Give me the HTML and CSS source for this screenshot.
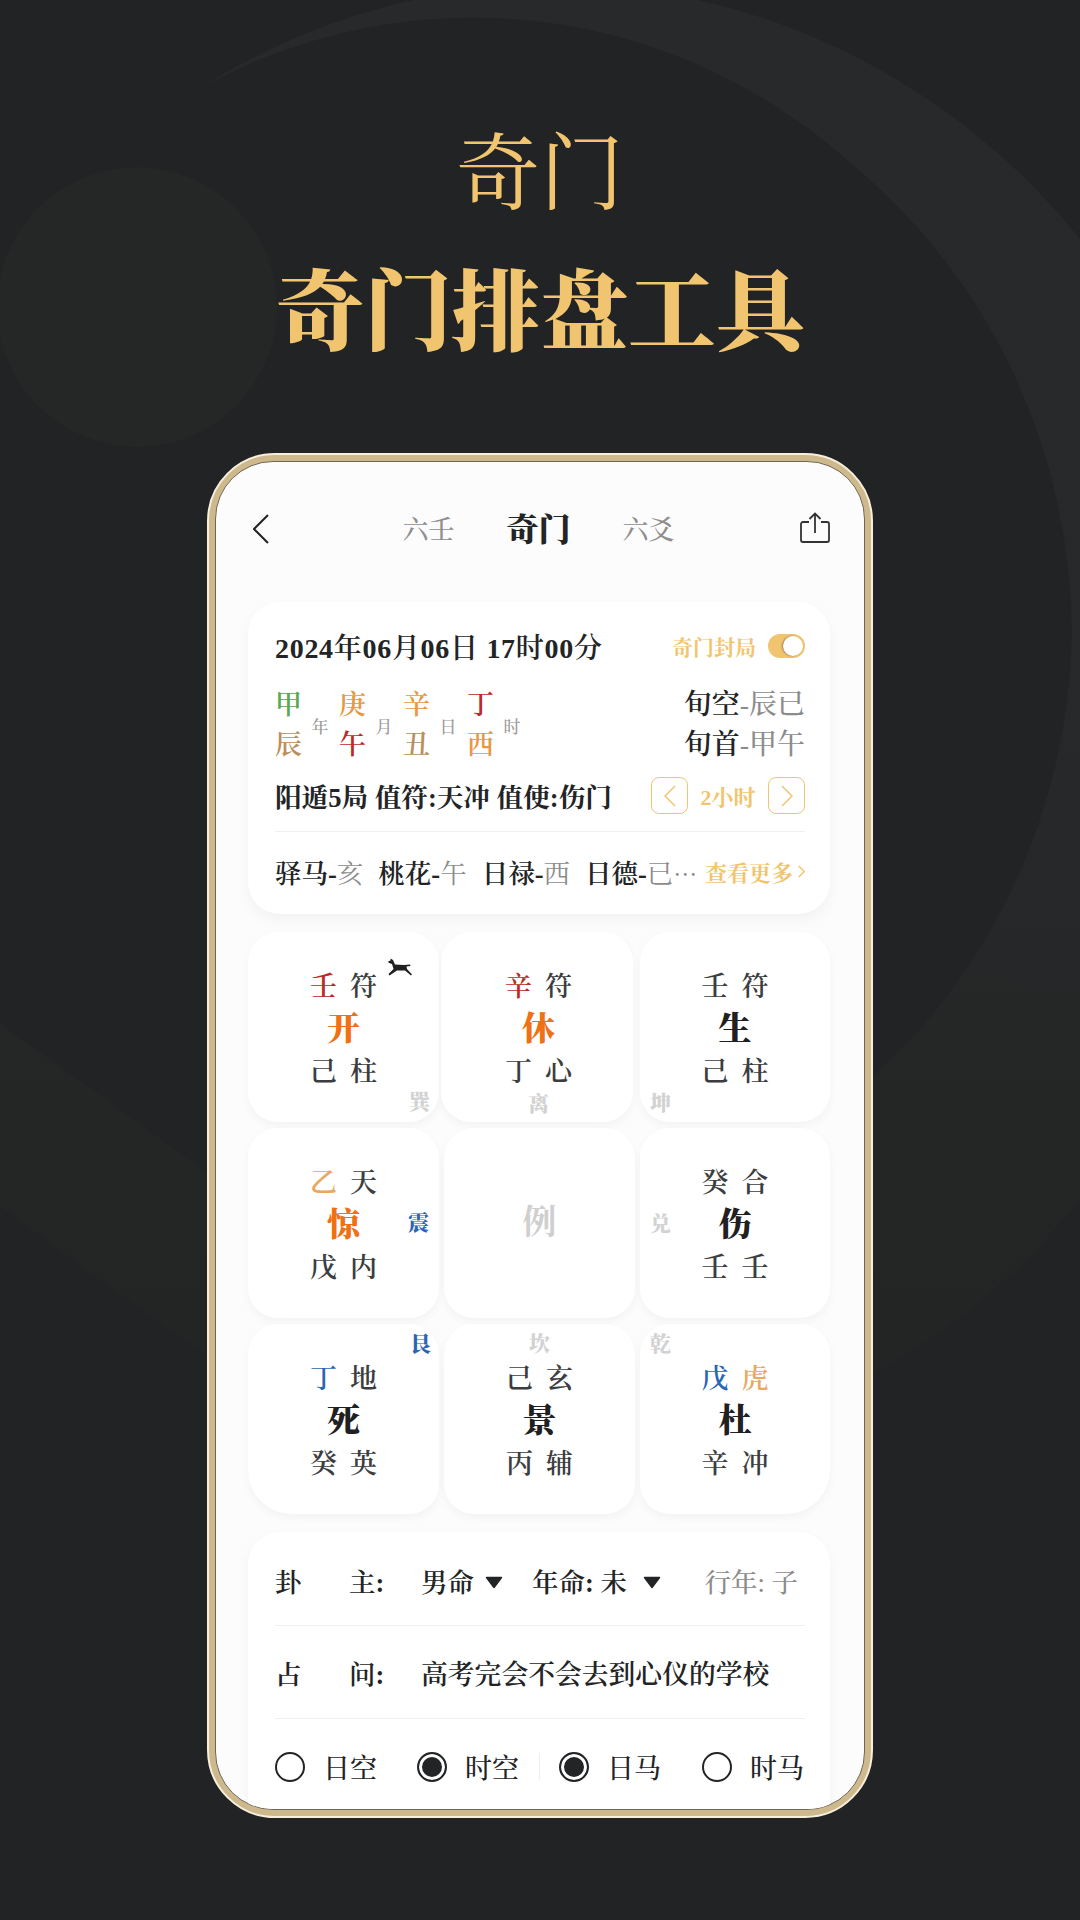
FILE: index.html
```html
<!DOCTYPE html>
<html lang="zh-CN">
<head>
<meta charset="utf-8">
<title>奇门排盘工具</title>
<link rel="stylesheet" href="styles.css">
</head>
<body>
<main class="page">
  <svg class="decor" viewBox="0 0 1080 1920" aria-hidden="true">
    <defs>
      <linearGradient id="bandFill" x1="0" y1="0" x2="0" y2="1">
        <stop offset="0" stop-color="#27292a"/>
        <stop offset="0.55" stop-color="#26282a"/>
        <stop offset="0.8" stop-color="#242625"/>
        <stop offset="1" stop-color="#232524"/>
      </linearGradient>
    </defs>
    <circle cx="137" cy="307" r="140" fill="#252726"/>
    <path fill="url(#bandFill)" d="M200 88 A687 718 0 0 1 1080 239 L1080 1200 A687 718 0 0 1 207 1355 Q100 1280 0 1206 L0 1024 Q100 1095 207 1173 A581 603 0 0 0 873 1077 A581 603 0 0 0 1072 637 A581 603 0 0 0 860 171 A581 603 0 0 0 200 88 Z"/>
  </svg>

  <header class="hero">
    <div class="hero-sub">奇门</div>
    <h1 class="hero-title">奇门排盘工具</h1>
  </header>

  <section class="phone">
    <div class="screen">
      <nav class="nav">
        <span class="nav-back">
          <svg class="icon-back" viewBox="0 0 16 30"><path d="M15 1 L1 15 L15 29"/></svg>
        </span>
        <div class="tabs">
          <span class="tab">六壬</span>
          <span class="tab tab-on">奇门</span>
          <span class="tab">六爻</span>
        </div>
        <svg class="icon-share" viewBox="0 0 30 31"><path d="M9 10 H3 a2 2 0 0 0 -2 2 V28 a2 2 0 0 0 2 2 H27 a2 2 0 0 0 2 -2 V12 a2 2 0 0 0 -2 -2 H21"/><path d="M15 21 V1.5 M9.5 7 L15 1.5 L20.500 7"/></svg>
      </nav>

      <section class="card card-info">
        <div class="row-date">
          <span class="date">2024年06月06日 17时00分</span>
          <span class="lock">奇门封局</span>
          <span class="toggle"><span class="knob"></span></span>
        </div>
        <div class="row-pillars">
          <div class="pillar"><div class="gz"><span class="green">甲</span><span class="tan">辰</span></div><span class="pl">年</span></div>
          <div class="pillar"><div class="gz"><span class="amber">庚</span><span class="red">午</span></div><span class="pl">月</span></div>
          <div class="pillar"><div class="gz"><span class="amber">辛</span><span class="tan">丑</span></div><span class="pl">日</span></div>
          <div class="pillar"><div class="gz"><span class="red">丁</span><span class="amber">西</span></div><span class="pl">时</span></div>
          <div class="xun">
            <div>旬空<span class="mute">-辰已</span></div>
            <div>旬首<span class="mute">-甲午</span></div>
          </div>
        </div>
        <div class="row-ju">
          <span class="ju">阳遁5局 值符:天冲 值使:伤门</span>
          <span class="step"><svg class="icon-step" viewBox="0 0 12 22"><path d="M11 1 L1 11 L11 21"/></svg></span>
          <span class="hours">2小时</span>
          <span class="step"><svg class="icon-step" viewBox="0 0 12 22"><path d="M1 1 L11 11 L1 21"/></svg></span>
        </div>
        <div class="rule"></div>
        <div class="row-more">
          <span class="sha">驿马<i class="dash">-</i><span class="mute">亥</span></span>
          <span class="sha">桃花<i class="dash">-</i><span class="mute">午</span></span>
          <span class="sha">日禄<i class="dash">-</i><span class="mute">西</span></span>
          <span class="sha sha-last">日德<i class="dash">-</i><span class="mute">已</span><span class="dots">…</span></span>
          <span class="more">查看更多<svg class="icon-more" viewBox="0 0 9 16"><path d="M1 1 L8 8 L1 15"/></svg></span>
        </div>
      </section>

      <section class="grid">
        <article class="cell">
          <svg class="horse" viewBox="0 0 24 18"><path d="M2.500 .5 L5 2 L7 6.500 L16 7 L22 6.500 L22.500 8 L18.500 8.500 L19 11 L24 16.500 L23 17.500 L17 12.500 L9 12.500 L1.500 17.500 L.5 16 L5.500 11 L4 6 L1 5 L0 3.500 L2.500 2.500 Z"/></svg>
          <div class="pair"><span class="red">壬</span><span>符</span></div>
          <div class="door orange">开</div>
          <div class="pair"><span>己</span><span>柱</span></div>
          <span class="gong gong-br">巽</span>
        </article>
        <article class="cell cell-shift">
          <div class="pair"><span class="red">辛</span><span>符</span></div>
          <div class="door orange">休</div>
          <div class="pair"><span>丁</span><span>心</span></div>
          <span class="gong gong-b">离</span>
        </article>
        <article class="cell">
          <div class="pair"><span>壬</span><span>符</span></div>
          <div class="door">生</div>
          <div class="pair"><span>己</span><span>柱</span></div>
          <span class="gong gong-bl">坤</span>
        </article>

        <article class="cell">
          <div class="pair"><span class="peach">乙</span><span>天</span></div>
          <div class="door orange">惊</div>
          <div class="pair"><span>戊</span><span>内</span></div>
          <span class="gong gong-r blue">震</span>
        </article>
        <article class="cell cell-center">
          <span class="example">例</span>
        </article>
        <article class="cell">
          <div class="pair"><span>癸</span><span>合</span></div>
          <div class="door">伤</div>
          <div class="pair"><span>壬</span><span>壬</span></div>
          <span class="gong gong-l">兑</span>
        </article>

        <article class="cell cell-round-bl">
          <div class="pair"><span class="blue">丁</span><span>地</span></div>
          <div class="door">死</div>
          <div class="pair"><span>癸</span><span>英</span></div>
          <span class="gong gong-tr blue">艮</span>
        </article>
        <article class="cell">
          <div class="pair"><span>己</span><span>玄</span></div>
          <div class="door">景</div>
          <div class="pair"><span>丙</span><span>辅</span></div>
          <span class="gong gong-t">坎</span>
        </article>
        <article class="cell cell-round-br">
          <div class="pair"><span class="blue">戊</span><span class="peach">虎</span></div>
          <div class="door">杜</div>
          <div class="pair"><span>辛</span><span>冲</span></div>
          <span class="gong gong-tl">乾</span>
        </article>
      </section>

      <section class="card card-form">
        <div class="form-row form-row-first">
          <span class="f-a">卦</span><span class="f-b">主:</span>
          <span>男命</span><svg class="caret caret-a" viewBox="0 0 18 13"><path d="M1.500 1.500 H16.500 L9 11.500 Z"/></svg>
          <span class="f-year">年命: 未</span><svg class="caret caret-b" viewBox="0 0 18 13"><path d="M1.500 1.500 H16.500 L9 11.500 Z"/></svg>
          <span class="f-walk">行年: 子</span>
        </div>
        <div class="rule"></div>
        <div class="form-row">
          <span class="f-a">占</span><span class="f-b">问:</span>
          <span class="question">高考完会不会去到心仪的学校</span>
        </div>
        <div class="rule"></div>
        <div class="radios">
          <label class="radio-item"><span class="radio"></span><span>日空</span></label>
          <label class="radio-item"><span class="radio radio-on"></span><span>时空</span></label>
          <span class="radio-sep"></span>
          <label class="radio-item radio-item-wide"><span class="radio radio-on"></span><span>日马</span></label>
          <label class="radio-item radio-item-last"><span class="radio"></span><span>时马</span></label>
        </div>
      </section>
    </div>
  </section>
</main>
</body>
</html>
```
FILE: styles.css
```css
* { box-sizing: border-box; }
html, body { margin: 0; padding: 0; }
body {
  background: #212325;
  font-family: "Liberation Serif", "Noto Serif CJK SC", "Noto Sans CJK SC", serif;
  color: #222426;
}
.page {
  position: relative;
  width: 1080px;
  height: 1920px;
  overflow: hidden;
  background: #212325;
}
.decor { position: absolute; inset: 0; width: 1080px; height: 1920px; }

.hero { position: relative; text-align: center; color: #f1c56f; padding-top: 125px; }
.hero-sub { font-size: 84px; line-height: 100px; font-weight: 400; }
.hero-title { margin: 39px 0 0; font-size: 88px; line-height: 100px; font-weight: 900; }

.phone {
  position: relative;
  width: 666px;
  height: 1365px;
  margin: 89px 0 0 207px;
  border: 2px solid #f7eedd;
  border-radius: 68px;
  background: #cdb98c;
  padding: 6px;
}
.screen {
  width: 100%;
  height: 100%;
  background: #fcfcfc;
  border: 1px solid #6f6653;
  border-radius: 58px;
  overflow: hidden;
}

.nav {
  display: flex;
  align-items: center;
  justify-content: space-between;
  height: 60px;
  margin: 37px 0 43px;
  padding: 0 34px 0 37px;
}
.nav-back { width: 24px; display: flex; }
.icon-back { width: 16px; height: 30px; fill: none; stroke: #222; stroke-width: 2; }
.tabs { display: flex; align-items: center; gap: 52px; margin-top: -4px; }
.tab { font-size: 26px; font-weight: 500; color: #8e8e8e; }
.tab-on { font-size: 32px; font-weight: 900; color: #222426; }
.icon-share { width: 30px; height: 31px; fill: none; stroke: #333; stroke-width: 1.800; margin-top: -3px; }

.card {
  width: 582px;
  margin-left: 32px;
  background: #fff;
  border-radius: 32px;
  box-shadow: 0 6px 14px rgba(0, 0, 0, .045);
}
.card-info { height: 312px; padding: 26px 25px 0 27px; }

.row-date { display: flex; align-items: center; height: 36px; }
.date { font-size: 28px; font-weight: 600; letter-spacing: .7px; white-space: nowrap; }
.lock { margin-left: auto; font-size: 21px; font-weight: 700; color: #f1c56f; }
.toggle {
  display: flex;
  justify-content: flex-end;
  align-items: center;
  width: 37px;
  height: 24px;
  margin-left: 12px;
  padding-right: 2px;
  border-radius: 12px;
  background: #f1c56f;
}
.knob {
  width: 20px;
  height: 20px;
  border-radius: 50%;
  background: #fff;
  box-shadow: -1px 0 2px rgba(0, 0, 0, .35);
}

.row-pillars { display: flex; align-items: center; height: 80px; margin-top: 21px; }
.pillar { display: flex; align-items: center; width: 64px; }
.gz { display: flex; flex-direction: column; width: 27px; font-size: 27px; line-height: 40px; font-weight: 600; text-align: center; }
.pl { width: 18px; margin-left: 9px; font-size: 17px; font-weight: 500; color: #9a9a9a; text-align: center; }
.xun { margin-left: auto; font-size: 28px; line-height: 40px; font-weight: 600; text-align: right; }
.mute { color: #8c8c8c; font-weight: 500; }

.row-ju { display: flex; align-items: center; height: 37px; margin-top: 12px; }
.ju { font-size: 26.600px; font-weight: 700; margin-right: auto; white-space: nowrap; }
.step {
  display: flex;
  align-items: center;
  justify-content: center;
  width: 37px;
  height: 37px;
  border: 1.500px solid #f1c56f;
  border-radius: 8px;
}
.icon-step { width: 12px; height: 22px; fill: none; stroke: #f1c56f; stroke-width: 1.500; }
.hours { width: 80px; text-align: center; font-size: 22px; font-weight: 700; color: #f1c56f; }

.rule { height: 1px; background: #efefef; }
.card-info .rule { margin-top: 17px; }

.row-more { display: flex; align-items: center; height: 78px; white-space: nowrap; }
.sha { font-size: 26.500px; font-weight: 600; margin-right: 15px; }
.sha-last { margin-right: 0; }
.sha .mute { font-weight: 400; }
.dash { font-style: normal; }
.dots { font-family: "Noto Serif CJK SC", "Noto Sans CJK SC", serif; font-size: 24px; color: #8c8c8c; }
.more {
  display: flex;
  align-items: center;
  gap: 5px;
  margin-left: auto;
  font-size: 22px;
  font-weight: 700;
  color: #f1c56f;
}
.icon-more { width: 7px; height: 13px; fill: none; stroke: #f1c56f; stroke-width: 2; }

.grid {
  display: grid;
  grid-template-columns: 191px 191px 190px;
  grid-auto-rows: 190px;
  gap: 6px 5px;
  width: 582px;
  margin: 18px 0 0 32px;
}
.cell {
  position: relative;
  padding-top: 35px;
  background: #fff;
  border-radius: 30px;
  box-shadow: 0 4px 10px rgba(0, 0, 0, .04);
  text-align: center;
}
.cell-shift { margin-left: -3px; margin-right: 2px; padding-left: 3px; }
.cell-round-bl { border-bottom-left-radius: 44px; }
.cell-round-br { border-bottom-right-radius: 44px; }
.cell-center { display: flex; align-items: center; justify-content: center; padding: 0 0 8px; }
.example { font-size: 34px; font-weight: 700; color: #cfcfcf; }

.pair { display: flex; justify-content: center; gap: 13px; font-size: 27px; line-height: 40px; font-weight: 600; color: #3b3d40; }
.door { font-size: 33px; line-height: 45px; font-weight: 900; color: #1f2022; }

.gong { position: absolute; font-size: 21px; line-height: 24px; font-weight: 900; color: #d2d2d2; }
.gong-br { right: 9px; bottom: 8px; }
.gong-b { left: 3px; right: 0; bottom: 6px; }
.gong-bl { left: 10px; bottom: 7px; }
.gong-r { right: 10px; top: 83px; }
.gong-l { left: 10px; top: 84px; }
.gong-tr { right: 8px; top: 8px; }
.gong-t { left: 0; right: 0; top: 8px; }
.gong-tl { left: 10px; top: 8px; }
.horse { position: absolute; left: 140px; top: 26px; width: 24px; height: 18px; fill: #1f2022; }

.green { color: #5aa84f; }
.tan { color: #b98f5b; }
.amber { color: #e8983f; }
.red { color: #b92b26; }
.orange { color: #f07014; }
.peach { color: #e9a760; }
.pair .blue, .gong.blue { color: #2a66b4; }
.pair .red { color: #b92b26; }
.pair .peach { color: #e9a760; }
.door.orange { color: #f07014; }

.card-form { height: 300px; margin-top: 18px; padding: 4px 25px 0 27px; }
.form-row { display: flex; align-items: center; height: 92px; font-size: 26.500px; font-weight: 600; white-space: nowrap; }
.form-row-first { height: 89px; }
.f-a { width: 74px; }
.f-b { width: 72px; }
.caret { width: 18px; height: 13px; margin-top: 3px; fill: #222426; stroke: #222426; stroke-width: 1.500; stroke-linejoin: round; }
.caret-a { margin-left: 11px; }
.caret-b { margin-left: 16px; }
.f-year { margin-left: 29px; }
.f-walk { margin-left: auto; margin-right: 7px; color: #8c8c8c; font-weight: 500; }
.question { font-size: 26.800px; }

.radios { display: flex; align-items: center; height: 92px; font-size: 27px; font-weight: 500; padding-top: 3px; }
.radio-item { display: flex; align-items: center; gap: 18px; width: 142px; flex: none; }
.radio-item-wide { width: 143px; }
.radio-item-last { width: auto; }
.radio {
  flex: none;
  width: 30px;
  height: 30px;
  border: 2px solid #222426;
  border-radius: 50%;
  background: #fff;
}
.radio-on { background: #222426; box-shadow: inset 0 0 0 3px #fff; }
.radio-sep { flex: none; width: 1px; height: 27px; margin: 0 19px 0 -20px; background: #eeeeee; }
```
